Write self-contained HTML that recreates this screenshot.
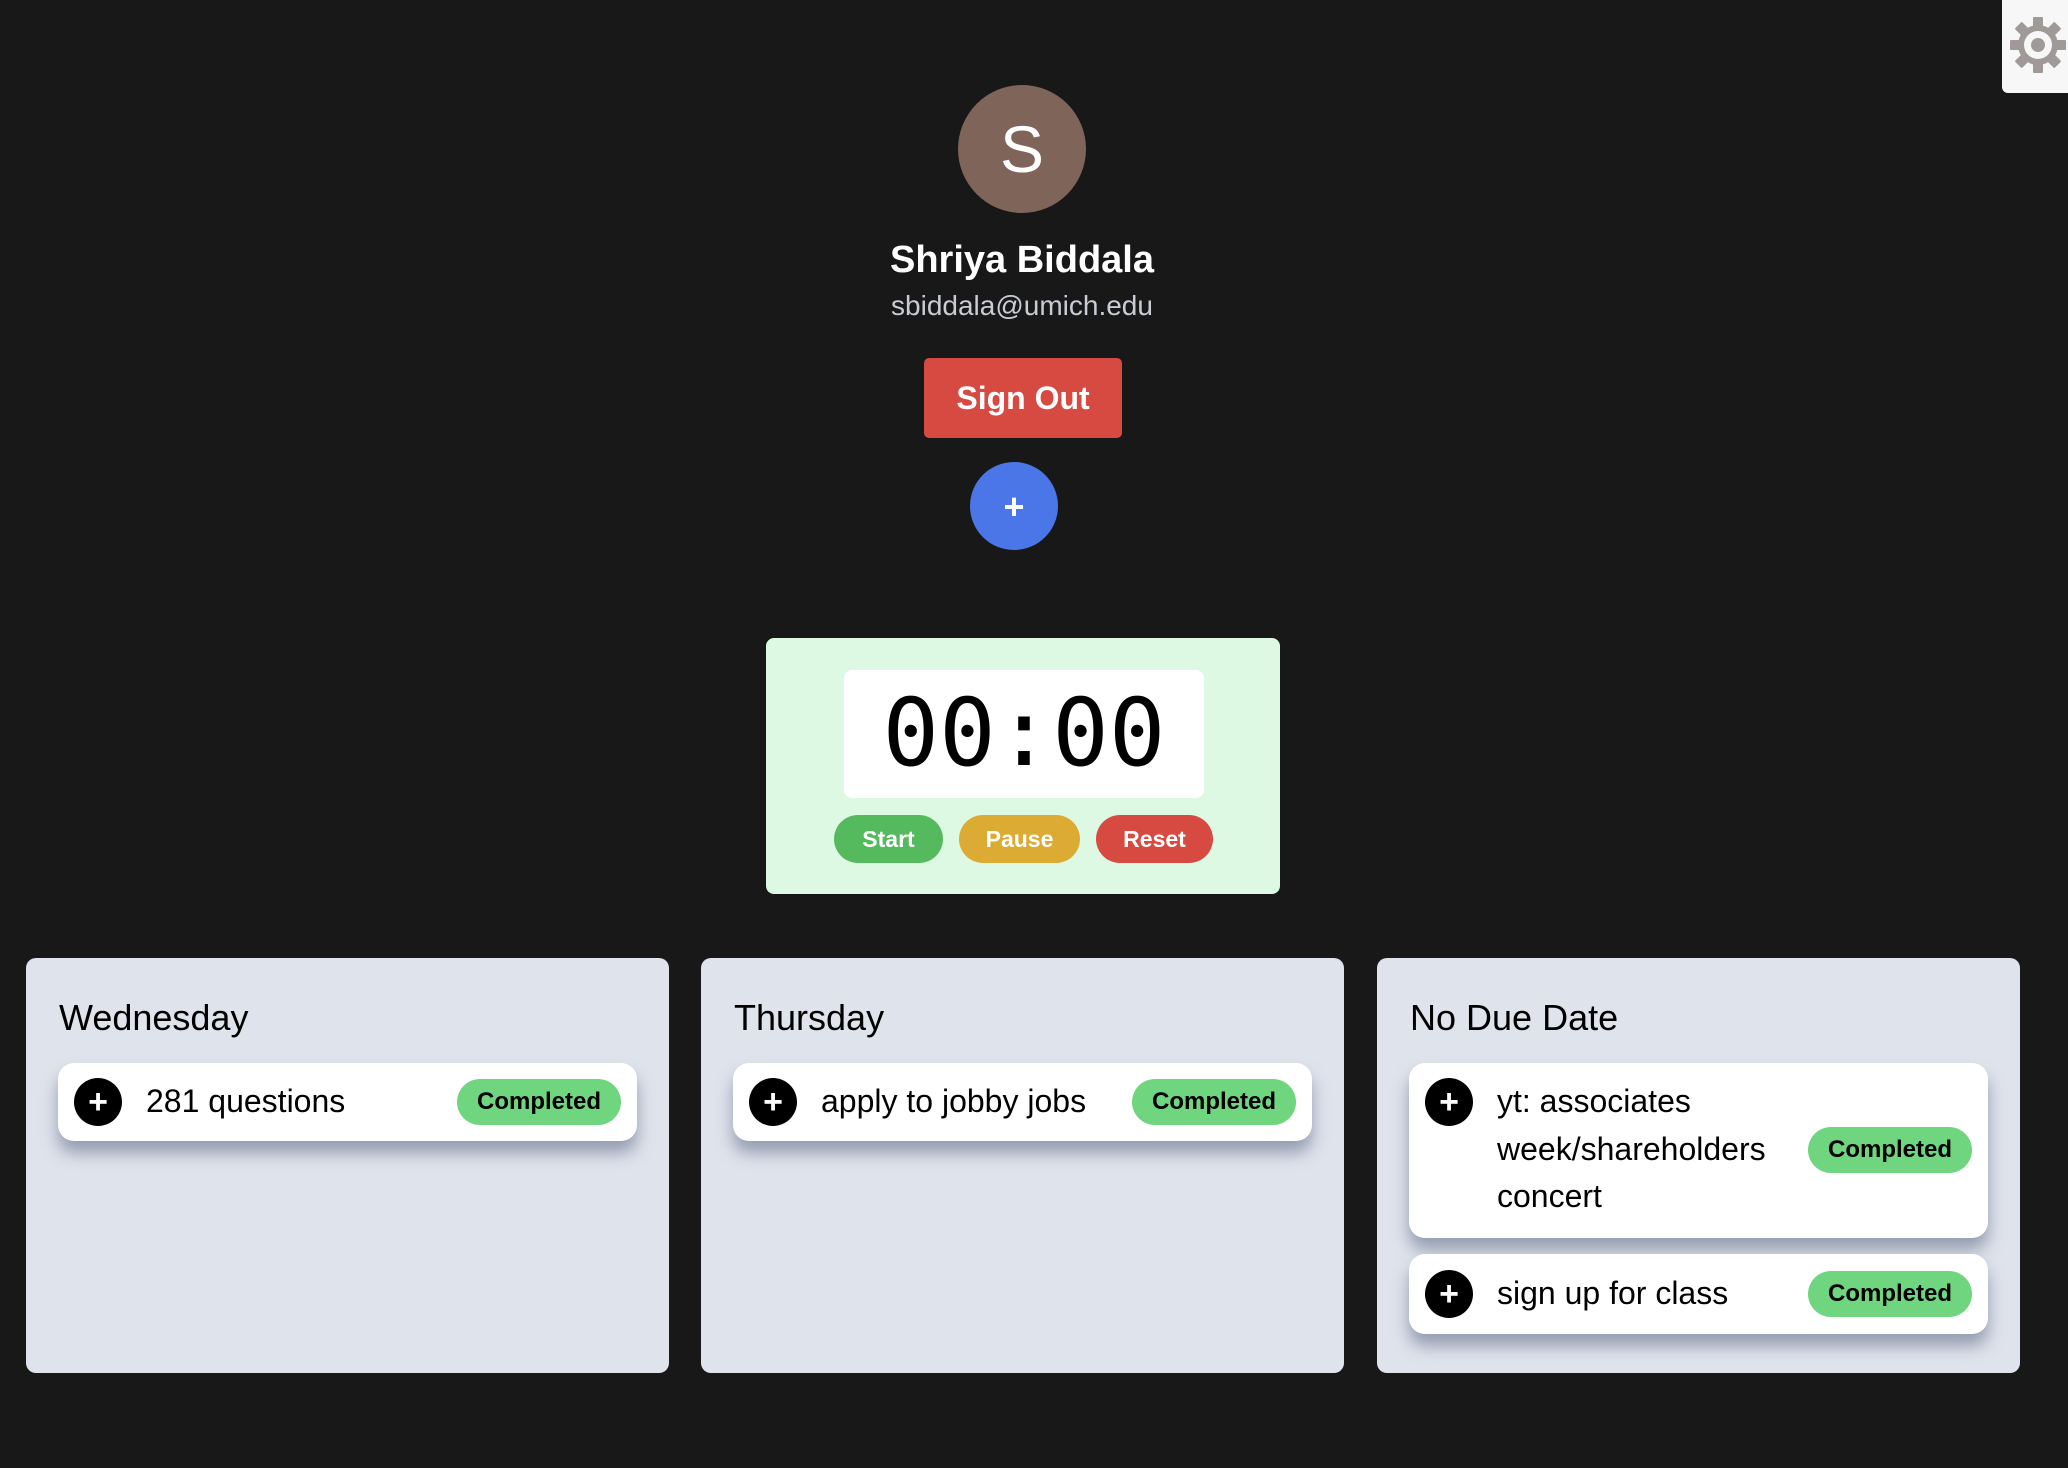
<!DOCTYPE html>
<html><head><meta charset="utf-8"><style>
*{box-sizing:border-box;margin:0;padding:0}
html,body{width:2068px;height:1468px;background:#181818;font-family:"Liberation Sans",sans-serif;overflow:hidden;position:relative}
.abs{position:absolute}
.avatar{left:958px;top:85px;width:128px;height:128px;border-radius:50%;background:#7f6459;color:#fff;font-size:66px;text-align:center;line-height:128px}
.name{left:0;width:2044px;top:237px;text-align:center;color:#fff;font-size:38px;font-weight:bold;line-height:46px}
.email{left:0;width:2044px;top:288px;text-align:center;color:#c8ccd4;font-size:28px;line-height:36px}
.signout{left:924px;top:358px;width:198px;height:80px;background:#d64a42;border-radius:5px;color:#fff;font-size:32px;font-weight:bold;text-align:center;line-height:80px}
.plus{left:970px;top:462px;width:88px;height:88px;border-radius:50%;background:#4a76e8;color:#fff;font-size:36px;font-weight:bold;text-align:center;line-height:90px}
.timer{left:766px;top:638px;width:514px;height:256px;background:#ddf8e3;border-radius:8px}
.disp{left:78px;top:32px;width:360px;height:128px;background:#fff;border-radius:8px;font-family:"DejaVu Sans Mono",monospace;font-size:94px;text-align:center;line-height:128px;color:#000}
.tb{top:177px;height:48px;border-radius:24px;color:#fff;font-weight:bold;font-size:23px;text-align:center;line-height:48px}
.col{top:958px;width:643px;height:415px;background:#dfe3ec;border-radius:10px}
.col h2{position:absolute;left:33px;top:38px;font-size:36px;font-weight:normal;color:#000;line-height:44px}
.task{position:absolute;left:32px;width:579px;background:#fff;border-radius:16px;box-shadow:0 12px 16px rgba(90,100,130,.55)}
.ic{position:absolute;left:16px;width:48px;height:48px;border-radius:50%;background:#000;color:#fff;font-weight:bold;font-size:34px;text-align:center;line-height:48px}
.tt{position:absolute;left:88px;font-size:32px;line-height:47.5px;color:#000}
.badge{position:absolute;right:16px;width:164px;height:46px;border-radius:23px;background:#6fd57e;color:#000;font-weight:bold;font-size:24px;text-align:center;line-height:46px}
</style></head><body>
<div class="abs" style="left:2002px;top:0;width:70px;height:93px;background:#f7f7f7;border-bottom-left-radius:6px">
<svg width="66" height="93" viewBox="0 0 66 93" style="position:absolute;left:0;top:0">
<g transform="translate(36,45)" fill="#9f9a97">
<g id="t"><rect x="-5" y="-28" width="10" height="12" rx="1"/></g>
<use href="#t" transform="rotate(45)"/><use href="#t" transform="rotate(90)"/><use href="#t" transform="rotate(135)"/><use href="#t" transform="rotate(180)"/><use href="#t" transform="rotate(225)"/><use href="#t" transform="rotate(270)"/><use href="#t" transform="rotate(315)"/>
<circle r="20"/><circle r="14" fill="#f7f7f7"/><circle r="7"/>
</g></svg></div>
<div class="abs avatar">S</div>
<div class="abs name">Shriya Biddala</div>
<div class="abs email">sbiddala@umich.edu</div>
<div class="abs signout">Sign Out</div>
<div class="abs plus">+</div>
<div class="abs timer">
<div class="abs disp">00:00</div>
<div class="abs tb" style="left:68px;width:109px;background:#55ba5d">Start</div>
<div class="abs tb" style="left:193px;width:121px;background:#dcab33">Pause</div>
<div class="abs tb" style="left:330px;width:117px;background:#d64a42">Reset</div>
</div>
<div class="abs col" style="left:26px"><h2>Wednesday</h2>
<div class="task" style="top:105px;height:78px"><div class="ic" style="top:15px">+</div><div class="tt" style="top:15px">281 questions</div><div class="badge" style="top:16px">Completed</div></div>
</div>
<div class="abs col" style="left:701px"><h2>Thursday</h2>
<div class="task" style="top:105px;height:78px"><div class="ic" style="top:15px">+</div><div class="tt" style="top:15px">apply to jobby jobs</div><div class="badge" style="top:16px">Completed</div></div>
</div>
<div class="abs col" style="left:1377px"><h2>No Due Date</h2>
<div class="task" style="top:105px;height:175px"><div class="ic" style="top:15px">+</div><div class="tt" style="top:15px;width:300px">yt: associates<br>week/shareholders<br>concert</div><div class="badge" style="top:64px">Completed</div></div>
<div class="task" style="top:296px;height:80px"><div class="ic" style="top:16px">+</div><div class="tt" style="top:16px">sign up for class</div><div class="badge" style="top:17px">Completed</div></div>
</div>
</body></html>
